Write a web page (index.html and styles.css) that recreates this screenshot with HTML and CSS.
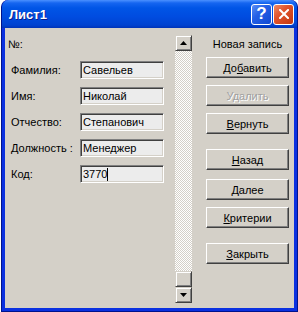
FILE: index.html
```html
<!DOCTYPE html>
<html lang="ru">
<head>
  <meta charset="UTF-8" />
  <title>Лист1</title>
  <link rel="stylesheet" href="styles.css">
</head>
<body>

  <div class="window">
    <div class="titlebar">
      <span class="title">Лист1</span>
      <div class="caption-buttons">
        <span class="cap-btn help">?</span>
        <span class="cap-btn close">
          <svg width="10" height="10" viewBox="0 0 10 10"><path d="M1 1L9 9M9 1L1 9" stroke="#fff" stroke-width="2" stroke-linecap="square"/></svg>
        </span>
      </div>
    </div>

    <div class="client">
      <div class="fields">
        <span class="label num">№:</span><span></span>
        <span class="label">Фамилия:</span><span class="field">Савельев</span>
        <span class="label">Имя:</span><span class="field">Николай</span>
        <span class="label">Отчество:</span><span class="field">Степанович</span>
        <span class="label">Должность :</span><span class="field">Менеджер</span>
        <span class="label">Код:</span><span class="field">3770<i class="caret"></i></span>
      </div>

      <div class="scrollbar">
        <span class="sb-btn">
          <svg width="7" height="4" viewBox="0 0 7 4"><path d="M3.5 0L7 4H0Z" fill="#000"/></svg>
        </span>
        <span class="track"></span>
        <span class="sb-btn"></span>
        <span class="sb-btn">
          <svg width="7" height="4" viewBox="0 0 7 4"><path d="M0 0H7L3.5 4Z" fill="#000"/></svg>
        </span>
      </div>

      <div class="actions">
        <div class="caption">Новая запись</div>
        <button>До<u>б</u>авить</button>
        <button class="disabled">Удалить</button>
        <button><u>В</u>ернуть</button>
        <button class="sep"><u>Н</u>азад</button>
        <button class="next"><u>Д</u>алее</button>
        <button><u>К</u>ритерии</button>
        <button class="sep"><u>З</u>акрыть</button>
      </div>
    </div>
  </div>

</body>
</html>
```

FILE: styles.css
```css
body {
  margin: 0;
  background-color: #fff;
  font-family: 'Liberation Sans', Arial, sans-serif;
  font-size: 11px;
  color: #000;
}
.window {
  margin-left: 1px;
  width: 297px;
  height: 312px;
  box-sizing: border-box;
  display: flex;
  flex-direction: column;
  background-color: #0a30e0;
  border: 1px solid #00138c;
  border-top: none;
  border-radius: 7px 7px 0 0;
}
.titlebar {
  height: 28px;
  display: flex;
  align-items: center;
  justify-content: space-between;
  padding: 0 3px 0 7px;
  border-radius: 7px 7px 0 0;
  background: linear-gradient(#4a90ff 0, #1565f0 3px, #0055e6 8px, #004ce0 60%, #0042d0 90%, #0033b8 100%);
}
.title {
  color: #fff;
  font-weight: bold;
  font-size: 13px;
  text-shadow: 1px 1px #0a1e8c;
}
.caption-buttons {
  display: flex;
  gap: 1px;
}
.cap-btn {
  width: 19px;
  height: 19px;
  display: flex;
  align-items: center;
  justify-content: center;
  border: 1px solid #fff;
  border-radius: 3px;
  color: #fff;
  font-weight: bold;
  font-size: 17px;
}
.help {
  background: linear-gradient(135deg, #5b8ef5 0, #2460e6 40%, #1048d2 100%);
}
.close {
  background: linear-gradient(135deg, #f08a64 0, #e0532c 40%, #c3370f 100%);
}
.client {
  flex: 1;
  margin: 0 3px 3px 3px;
  display: flex;
  background-color: #d4d0c8;
}
.fields {
  width: 159px;
  padding: 7px 0 0 6px;
  display: grid;
  grid-template-columns: 69px 84px;
  grid-auto-rows: 18px;
  row-gap: 8px;
  align-content: start;
}
.label {
  display: flex;
  align-items: center;
}
.num {
  margin-left: -3px;
}
.field {
  box-sizing: border-box;
  display: flex;
  align-items: center;
  padding-left: 2px;
  background-color: #ececec;
  border: 1px solid;
  border-color: #808080 #fff #fff #808080;
  box-shadow: inset 1px 1px #404040, inset -1px -1px #d4d0c8;
}
.caret {
  display: inline-block;
  width: 1px;
  height: 13px;
  background-color: #000;
}
.scrollbar {
  width: 17px;
  height: 268px;
  margin: 7px 0 0 5px;
  display: flex;
  flex-direction: column;
}
.sb-btn {
  height: 16px;
  box-sizing: border-box;
  display: flex;
  align-items: center;
  justify-content: center;
  background-color: #d4d0c8;
  border: 1px solid;
  border-color: #d4d0c8 #404040 #404040 #d4d0c8;
  box-shadow: inset 1px 1px #fff, inset -1px -1px #808080;
}
.track {
  flex: 1;
  background: repeating-conic-gradient(#fff 0 25%, #d4d0c8 0 50%) 0 0 / 2px 2px;
}
.actions {
  width: 83px;
  margin-left: 14px;
  padding-top: 9px;
  display: flex;
  flex-direction: column;
}
.caption {
  height: 14px;
  line-height: 14px;
  text-align: center;
  margin-bottom: 6px;
}
button {
  height: 21px;
  margin: 0 0 7px 0;
  padding: 0;
  font-family: inherit;
  font-size: 11px;
  color: #000;
  background-color: #d4d0c8;
  border: 1px solid;
  border-color: #fff #404040 #404040 #fff;
  box-shadow: inset -1px -1px #808080;
}
button.sep {
  margin-top: 8px;
}
button.next {
  margin-top: 2px;
}
button.disabled {
  color: #a0a0a0;
  text-shadow: 1px 1px #fff;
}
```
